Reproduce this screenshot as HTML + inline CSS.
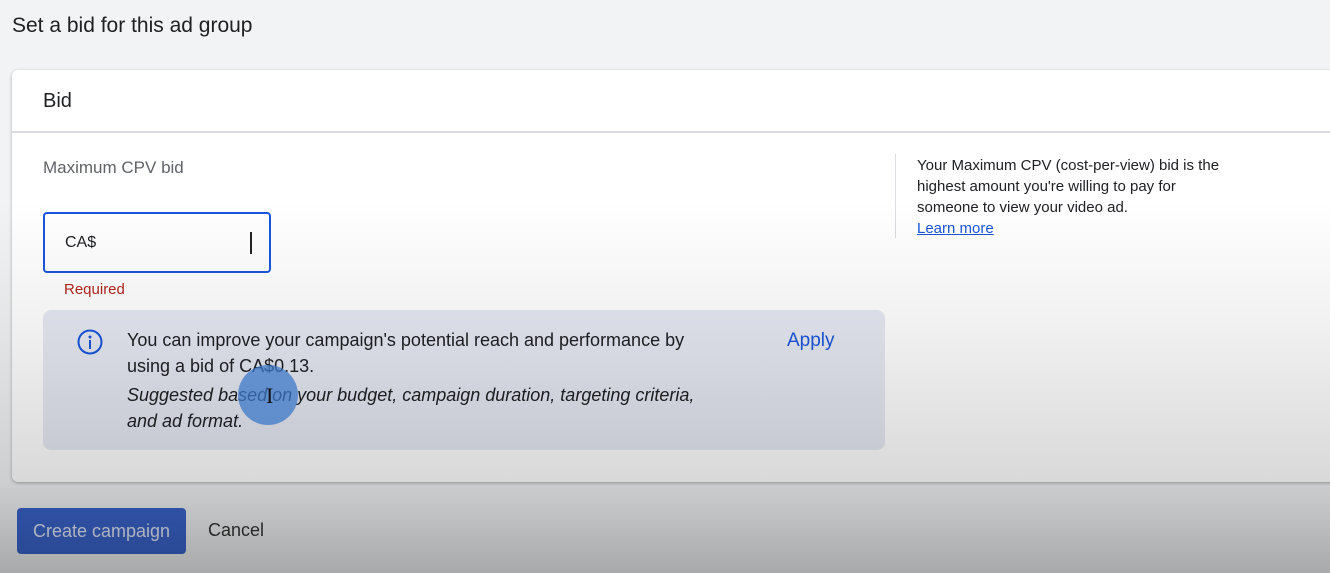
<!DOCTYPE html>
<html><head><style>
*{margin:0;padding:0;box-sizing:border-box}
body{width:1330px;height:573px;overflow:hidden;background:#f1f3f4;font-family:"Liberation Sans",sans-serif;position:relative;color:#202124}
.t{position:absolute;left:12px;top:14px;font-size:21px;color:#202124}
.card{position:absolute;left:12px;top:70px;width:1330px;height:412px;background:#fff;border-radius:6px;box-shadow:0 1px 3px rgba(0,0,0,.3)}
.hd{height:63px;border-bottom:2px solid #dadce0;font-size:20px;padding:20px 0 0 31px}
.lab{position:absolute;left:31px;top:88px;font-size:17px;color:#5f6368}
.inp{position:absolute;left:31px;top:142px;width:228px;height:61px;border:2px solid #1a56db;border-radius:4px;font-size:16px;padding:20px 0 0 20px}
.cur{position:absolute;left:205px;top:18px;width:1.5px;height:22px;background:#222}
.req{position:absolute;left:52px;top:211px;font-size:15px;color:#b3261e}
.info{position:absolute;left:31px;top:240px;width:842px;height:140px;background:#e6e9f3;border-radius:8px}
.ic{position:absolute;left:34px;top:19px}
.tx{position:absolute;left:84px;top:17px;width:700px;font-size:18px;line-height:26px;color:#202124;white-space:nowrap}
.tx i{display:block;margin-top:3px}
.ap{position:absolute;left:744px;top:20px;font-size:19px;color:#1a56db}
.vl{position:absolute;left:883px;top:84px;width:1px;height:84px;background:#dadce0}
.side{position:absolute;left:905px;top:85px;width:400px;font-size:15px;line-height:21px;color:#202124;white-space:nowrap}
.side a{color:#1a56db;text-decoration:underline}
.btn{position:absolute;left:17px;top:508px;width:169px;height:46px;background:#3a64cc;border-radius:4px;color:#e3e9fa;font-size:18px;text-align:center;line-height:46px}
.cn{position:absolute;left:208px;top:520px;font-size:18px;color:#333}
.ov{position:absolute;left:0;top:0;width:1330px;height:573px;pointer-events:none;background:linear-gradient(to bottom,rgba(0,0,0,0) 0px,rgba(0,0,0,0) 200px,rgba(0,0,0,.06) 330px,rgba(0,0,0,.15) 480px,rgba(0,0,0,.3) 573px)}
.blob{position:absolute;left:238px;top:365px;width:60px;height:60px;border-radius:50%;background:rgba(60,120,200,.75)}
.ib{position:absolute;left:266px;top:383px;font-size:22px;color:#111;font-family:"Liberation Serif",serif}
</style></head><body>
<div class="t">Set a bid for this ad group</div>
<div class="card">
<div class="hd">Bid</div>
<div class="lab">Maximum CPV bid</div>
<div class="inp">CA$<div class="cur"></div></div>
<div class="req">Required</div>
<div class="info">
<svg class="ic" width="26" height="26" viewBox="0 0 26 26"><circle cx="13" cy="13" r="11.5" fill="none" stroke="#1a56db" stroke-width="2"/><circle cx="13" cy="8" r="1.5" fill="#1a56db"/><rect x="12" y="11" width="2" height="9" fill="#1a56db"/></svg>
<div class="tx">You can improve your campaign's potential reach and performance by<br>using a bid of CA$0.13.<i>Suggested based on your budget, campaign duration, targeting criteria,<br>and ad format.</i></div>
<div class="ap">Apply</div>
</div>
<div class="vl"></div>
<div class="side">Your Maximum CPV (cost-per-view) bid is the<br>highest amount you're willing to pay for<br>someone to view your video ad.<br><a>Learn more</a></div>
</div>
<div class="btn">Create campaign</div>
<div class="cn">Cancel</div>
<div class="ov"></div>
<div class="blob"></div>
<div class="ib">I</div>
</body></html>
